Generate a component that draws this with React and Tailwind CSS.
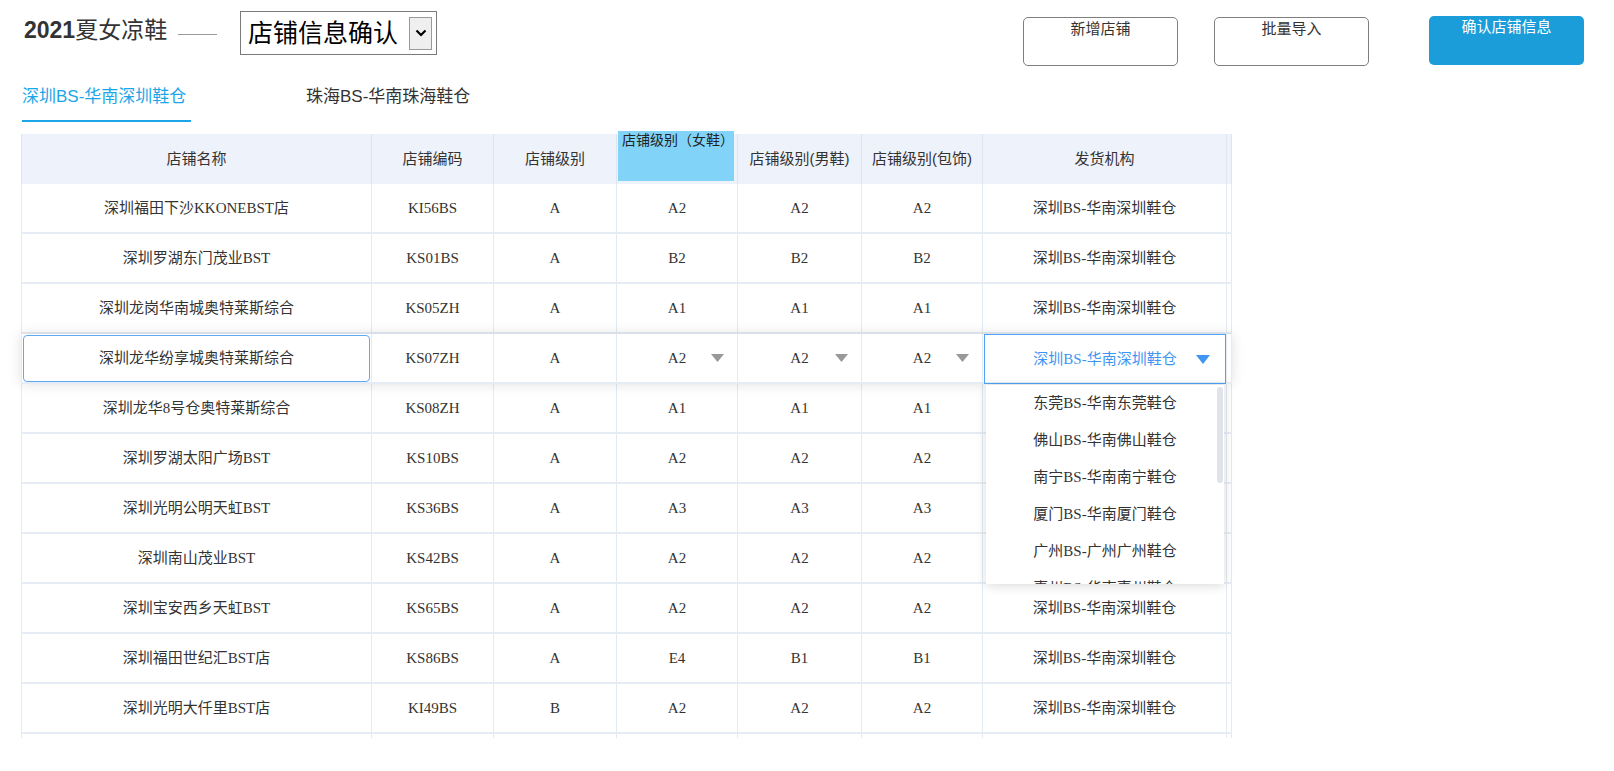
import React from "react";

const SANS = { fontFamily: '"Liberation Sans", "Noto Sans CJK SC", sans-serif' };

const W = [
  "w-[351px] border-l",
  "w-[122px]",
  "w-[123px]",
  "w-[121px]",
  "w-[124px]",
  "w-[121px]",
  "w-[244px]",
  "w-[5px]",
];

const ORG = "深圳BS-华南深圳鞋仓";

const rows = [
  ["深圳福田下沙KKONEBST店", "KI56BS", "A", "A2", "A2", "A2", ORG],
  ["深圳罗湖东门茂业BST", "KS01BS", "A", "B2", "B2", "B2", ORG],
  ["深圳龙岗华南城奥特莱斯综合", "KS05ZH", "A", "A1", "A1", "A1", ORG],
  null,
  ["深圳龙华8号仓奥特莱斯综合", "KS08ZH", "A", "A1", "A1", "A1", ""],
  ["深圳罗湖太阳广场BST", "KS10BS", "A", "A2", "A2", "A2", ""],
  ["深圳光明公明天虹BST", "KS36BS", "A", "A3", "A3", "A3", ""],
  ["深圳南山茂业BST", "KS42BS", "A", "A2", "A2", "A2", ""],
  ["深圳宝安西乡天虹BST", "KS65BS", "A", "A2", "A2", "A2", ORG],
  ["深圳福田世纪汇BST店", "KS86BS", "A", "E4", "B1", "B1", ORG],
  ["深圳光明大仟里BST店", "KI49BS", "B", "A2", "A2", "A2", ORG],
];

const options = [
  "东莞BS-华南东莞鞋仓",
  "佛山BS-华南佛山鞋仓",
  "南宁BS-华南南宁鞋仓",
  "厦门BS-华南厦门鞋仓",
  "广州BS-广州广州鞋仓",
  "惠州BS-华南惠州鞋仓",
];

function Tri({ color }) {
  return (
    <svg width="13" height="8" viewBox="0 0 13 8" className="block">
      <polygon points="0,0 13,0 6.5,8" fill={color} />
    </svg>
  );
}

function Header() {
  const heads = ["店铺名称", "店铺编码", "店铺级别", "", "店铺级别(男鞋)", "店铺级别(包饰)", "发货机构", ""];
  return (
    <div className="flex h-[50px] bg-[#eef2fb]" style={SANS}>
      {heads.map((h, i) => (
        <div
          key={i}
          className={`${W[i]} relative shrink-0 flex items-center justify-center border-r border-[#dde6f0] text-[15px] text-[#333]`}
        >
          {i === 3 ? (
            <div className="absolute left-[1px] top-[-3px] w-[116px] h-[50px] bg-[#81d3f8] pl-[4px] pt-[1px] text-[14px] leading-[17px] text-[#222] whitespace-nowrap">
              店铺级别（女鞋）
            </div>
          ) : (
            h
          )}
        </div>
      ))}
    </div>
  );
}

function Row({ r }) {
  return (
    <div className="flex h-[50px] border-b-2 border-[#e5ecf4] bg-white">
      {r.map((c, i) => (
        <div
          key={i}
          className={`${W[i]} shrink-0 flex items-center justify-center border-r border-[#e3eaf2] text-[15px] text-[#333] whitespace-nowrap`}
        >
          {c}
        </div>
      ))}
      <div className={`${W[7]} shrink-0 border-r border-[#e3eaf2]`} />
    </div>
  );
}

function EditRow() {
  return (
    <div className="relative z-10 flex h-[50px] border-b-2 border-[#e5ecf4] bg-white shadow-[0_0_12px_rgba(0,0,0,0.13)]">
      <div className={`${W[0]} relative shrink-0 border-r border-[#e3eaf2]`}>
        <div className="absolute left-[1px] right-[1px] top-[1px] h-[47px] border border-[#5fa9f4] rounded-[4px] flex items-center justify-center text-[15px] text-[#333]">
          深圳龙华纷享城奥特莱斯综合
        </div>
      </div>
      <div className={`${W[1]} shrink-0 flex items-center justify-center border-r border-[#e3eaf2] text-[15px] text-[#333]`}>KS07ZH</div>
      <div className={`${W[2]} shrink-0 flex items-center justify-center border-r border-[#e3eaf2] text-[15px] text-[#333]`}>A</div>
      {[3, 4, 5].map((i) => (
        <div
          key={i}
          className={`${W[i]} relative shrink-0 flex items-center justify-center border-r border-[#e3eaf2] text-[15px] text-[#333]`}
        >
          A2
          <div className="absolute right-[13px] top-[20px]">
            <Tri color="#999999" />
          </div>
        </div>
      ))}
      <div className={`${W[6]} relative shrink-0 border-r border-[#e3eaf2]`}>
        <div className="absolute left-[1px] right-0 top-0 bottom-[-2px] border border-[#4ea2f7] flex items-center justify-center text-[15px] text-[#3f95f2]">
          {ORG}
          <div className="absolute right-[15px] top-[20px]">
            <svg width="14" height="9" viewBox="0 0 14 9" className="block">
              <polygon points="0,0 14,0 7,9" fill="#3f95f2" />
            </svg>
          </div>
        </div>
        <div className="absolute left-[3px] top-[51px] w-[238px] h-[199px] bg-white overflow-hidden shadow-[0_2px_10px_rgba(0,0,0,0.14)] z-20">
          <div>
            {options.map((o) => (
              <div key={o} className="h-[37px] flex items-center justify-center text-[15px] text-[#333] whitespace-nowrap">
                {o}
              </div>
            ))}
          </div>
          <div className="absolute right-[1px] top-[2px] w-[6px] h-[96px] rounded-[3px] bg-[#dfe3ea]" />
        </div>
      </div>
      <div className={`${W[7]} shrink-0 border-r border-[#e3eaf2]`} />
    </div>
  );
}

export default function App() {
  return (
    <div className="w-[1614px] h-[771px] bg-white overflow-hidden" style={SANS}>
      {/* top bar */}
      <div className="flex items-start h-[66px]">
        <div className="ml-[24px] w-[154px] shrink-0 mt-[15px] leading-[30px] text-[23px] text-[#333] whitespace-nowrap">
          <span className="font-bold">2021</span>
          <span>夏女凉鞋</span>
        </div>
        <div className="mt-[34px] w-[39px] h-px bg-[#9a9a9a] shrink-0" />
        <div className="ml-[23px] mt-[11px] w-[197px] h-[44px] shrink-0 border border-[#7a7a7a] flex items-center pl-[7px] pr-[4px]">
          <span className="flex-1 text-[25px] leading-none text-black whitespace-nowrap">店铺信息确认</span>
          <div className="w-[23px] h-[33px] border border-[#9a9a9a] bg-[#efefef] flex items-center justify-center">
            <svg width="12" height="8" viewBox="0 0 12 8" className="block">
              <path d="M1.5 1.5 L6 6 L10.5 1.5" fill="none" stroke="#000" strokeWidth="2.2" />
            </svg>
          </div>
        </div>
        <div className="ml-[586px] mt-[17px] w-[155px] h-[49px] shrink-0 border border-[#7f7f7f] rounded-[5px] text-center text-[15px] leading-[20px] pt-[1px] text-[#333]">
          新增店铺
        </div>
        <div className="ml-[36px] mt-[17px] w-[155px] h-[49px] shrink-0 border border-[#7f7f7f] rounded-[5px] text-center text-[15px] leading-[20px] pt-[1px] text-[#333]">
          批量导入
        </div>
        <div className="ml-[60px] mt-[16px] w-[155px] h-[49px] shrink-0 rounded-[5px] bg-[#1a9dd8] text-center text-[15px] leading-[20px] pt-[1px] text-white">
          确认店铺信息
        </div>
      </div>

      {/* tabs */}
      <div className="flex items-start mt-[20px] ml-[22px]">
        <div className="w-[169px] text-[17px] leading-[22px] text-[#1ba6e8] pb-[12px] border-b-2 border-[#1ba6e8] whitespace-nowrap">
          深圳BS-华南深圳鞋仓
        </div>
        <div className="ml-[115px] text-[17px] leading-[22px] text-[#333] whitespace-nowrap">
          珠海BS-华南珠海鞋仓
        </div>
      </div>

      {/* table */}
      <div className="mt-[12px] ml-[21px] w-[1211px]">
        <Header />
        <div style={{ fontFamily: '"Liberation Serif", "Noto Sans CJK SC", serif' }}>
          {rows.map((r, idx) => (r ? <Row key={idx} r={r} /> : <EditRow key={idx} />))}
          <div className="flex h-[4px]">
            {W.map((w, i) => (
              <div key={i} className={`${w} shrink-0 border-r border-[#e3eaf2]`} />
            ))}
          </div>
        </div>
      </div>
    </div>
  );
}
